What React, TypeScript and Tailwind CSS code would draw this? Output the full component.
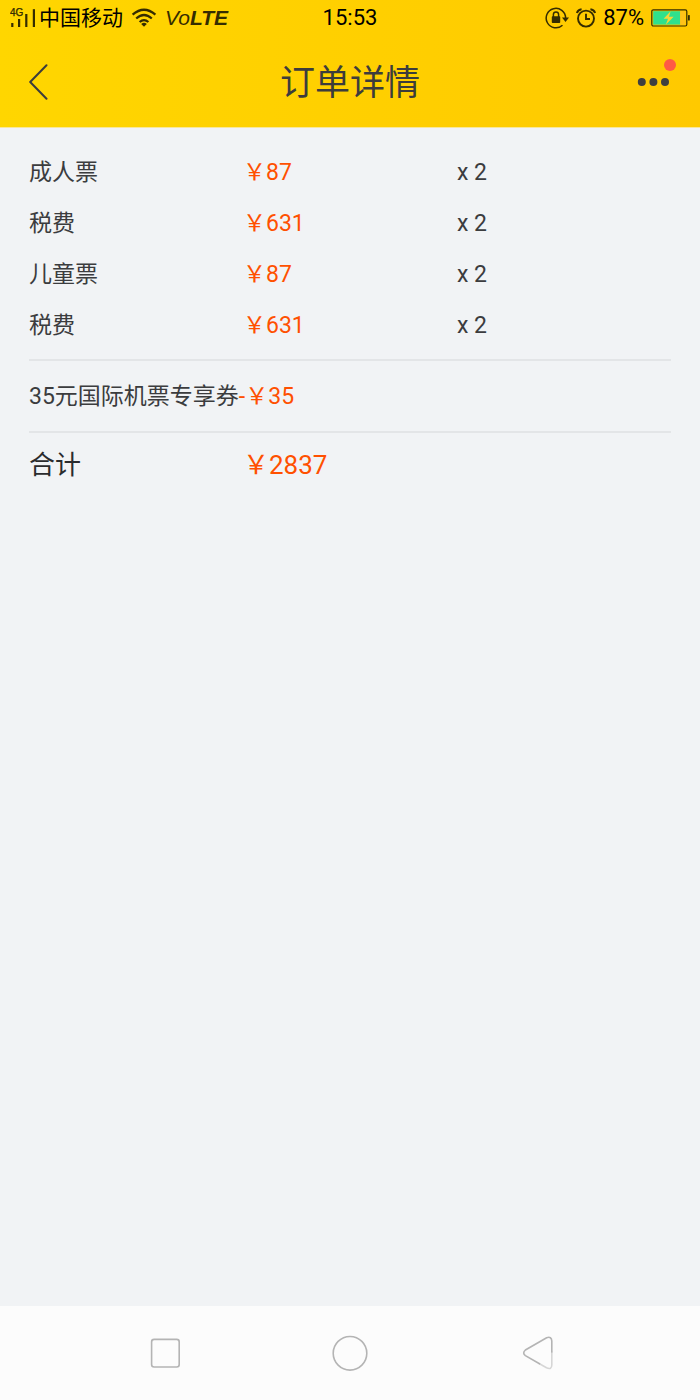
type Fare = { label: string; price: string; count: string };

const fares: Fare[] = [
  { label: "成人票", price: "￥87", count: "x 2" },
  { label: "税费", price: "￥631", count: "x 2" },
  { label: "儿童票", price: "￥87", count: "x 2" },
  { label: "税费", price: "￥631", count: "x 2" },
];

function SignalIcon() {
  return (
    <svg width="27" height="20" viewBox="0 0 27 20" fill="#352c00" aria-hidden="true">
      <text x="0" y="8" fontSize="10" fontWeight="400" stroke="#352c00" strokeWidth="0.3" fontFamily="Liberation Sans, sans-serif">
        4G
      </text>
      <rect x="1.2" y="15" width="2.2" height="4" />
      <rect x="8" y="11" width="2.2" height="8" />
      <rect x="15.2" y="6" width="2.2" height="13" />
      <rect x="22.8" y="1.2" width="2.2" height="17.8" />
    </svg>
  );
}

function WifiIcon() {
  return (
    <svg width="26" height="20" viewBox="0 0 26 20" fill="none" stroke="#352c00" strokeWidth="2.3" aria-hidden="true">
      <path d="M1.6 6.7Q13 -3.1 24.4 6.7" />
      <path d="M5.2 10.5Q13 3.6 20.8 10.5" />
      <path d="M8.6 14Q13 10.2 17.4 14" />
      <path d="M10.2 16Q13 13.6 15.8 16L13 18.8Z" fill="#352c00" stroke="none" />
    </svg>
  );
}

function RotationLockIcon() {
  return (
    <svg width="24" height="22" viewBox="0 0 24 22" fill="none" stroke="#352c00" strokeWidth="1.5" aria-hidden="true">
      <path d="M17.5 18.2A9.7 9.7 0 1 1 20.6 11" />
      <path d="M17 10.6H24L20.5 15Z" fill="#352c00" stroke="none" />
      <path d="M8.4 10V7.6a2.6 2.6 0 0 1 5.2 0V10" />
      <rect x="6.8" y="9.2" width="8.4" height="6.8" rx="0.8" fill="#352c00" stroke="none" />
    </svg>
  );
}

function AlarmIcon() {
  return (
    <svg width="20" height="20" viewBox="0 0 20 20" fill="none" stroke="#352c00" strokeWidth="1.9" aria-hidden="true">
      <circle cx="10" cy="10.6" r="8" />
      <path d="M10 5.8V11H14" />
      <path d="M0.9 5Q2 1.8 5.6 1.3M19.1 5Q18 1.8 14.4 1.3" strokeWidth="2" />
    </svg>
  );
}

function BatteryIcon() {
  return (
    <svg width="39" height="18" viewBox="0 0 39 18" aria-hidden="true">
      <rect x="0.8" y="0.8" width="35" height="16.2" rx="1.5" fill="#ffca00" stroke="#352c00" strokeWidth="1.2" />
      <rect x="2.2" y="2.2" width="27" height="13.4" fill="#2fe08d" />
      <rect x="29.2" y="2.2" width="5" height="13.4" fill="#ffc21a" />
      <path d="M19.6 2.2L12.6 9.8H17L14.8 15.8L22.6 7.8H18Z" fill="#f3d63a" />
      <rect x="37" y="6" width="1.8" height="5.6" rx="0.6" fill="#352c00" />
    </svg>
  );
}

function StatusBar() {
  return (
    <div className="grid h-9 grid-cols-[1fr_auto_1fr] items-center px-2.5 text-[22px] leading-9 text-black">
      <div className="flex items-center">
        <SignalIcon />
        <span className="ml-0.5 text-[21px]">中国移动</span>
        <span className="ml-2 flex">
          <WifiIcon />
        </span>
        <span className="ml-2 font-['Liberation_Sans',sans-serif] text-[21px] text-[#352c00] italic">
          Vo<b>LTE</b>
        </span>
      </div>
      <time>15:53</time>
      <div className="flex items-center justify-end gap-[7px]">
        <RotationLockIcon />
        <AlarmIcon />
        <span>87%</span>
        <BatteryIcon />
      </div>
    </div>
  );
}

function TitleBar() {
  return (
    <div className="grid h-[91px] grid-cols-[1fr_auto_1fr] items-center px-7 text-[#3c3c3c]">
      <button type="button" aria-label="返回" className="flex w-10 items-center py-4">
        <svg width="20" height="36" viewBox="0 0 20 36" fill="none" stroke="#3c3c3c" strokeWidth="2" strokeLinecap="round" strokeLinejoin="round">
          <path d="M18.5 1.2L2.2 18L18.5 34.8" />
        </svg>
      </button>
      <h1 className="pt-1 text-[35px] leading-[52px]">订单详情</h1>
      <button type="button" aria-label="更多" className="relative flex justify-self-end">
        <svg width="40" height="48" viewBox="0 0 40 48" fill="#3f3f3f">
          <circle cx="9.8" cy="24" r="4" />
          <circle cx="21.4" cy="24" r="4" />
          <circle cx="33" cy="24" r="4" />
        </svg>
        <span className="absolute top-px -right-1 size-3 rounded-full bg-[#ff5a45]" />
      </button>
    </div>
  );
}

function NavBar() {
  return (
    <nav className="grid h-[94px] grid-cols-3 items-center bg-[#fcfcfc] px-[72px]">
      <button type="button" aria-label="最近任务" className="flex justify-center">
        <svg width="40" height="40" viewBox="0 0 40 40" fill="none" stroke="#b4b4b4" strokeWidth="1.6">
          <rect x="6.6" y="6.4" width="27.6" height="27.6" rx="2.5" />
        </svg>
      </button>
      <button type="button" aria-label="主页" className="flex justify-center">
        <svg width="40" height="40" viewBox="0 0 40 40" fill="none" stroke="#b4b4b4" strokeWidth="1.6">
          <circle cx="20" cy="20.3" r="16.8" />
        </svg>
      </button>
      <button type="button" aria-label="后退" className="flex justify-center">
        <svg width="40" height="40" viewBox="0 0 40 40" fill="none" strokeWidth="1.6" strokeLinecap="round">
          <path d="M24.5 30.8L31.5 34.8Q36.8 37 36.8 32V19" stroke="#d6d6d6" />
          <path d="M36.8 19V8Q36.6 3 31.6 4.8L10.4 17Q7 20 10.4 22.6L24.5 30.8" stroke="#b4b4b4" />
        </svg>
      </button>
    </nav>
  );
}

export default function App() {
  return (
    <div className="flex min-h-screen flex-col bg-[#f1f3f5] font-[Roboto,'Noto_Sans_CJK_SC',sans-serif] text-[#3b3c3e]">
      <header className="border-b border-[#f8e79a] bg-linear-to-r from-[#ffd600] to-[#ffc900]">
        <StatusBar />
        <TitleBar />
      </header>
      <main className="flex-1 px-[29px] pt-5 text-[23px]">
        <table className="w-full table-fixed text-left">
          <tbody>
            {fares.map((fare, i) => (
              <tr key={i} className="h-[51px]">
                <th scope="row" className="p-0 font-normal">{fare.label}</th>
                <td className="p-0 text-[#ff5000]">{fare.price}</td>
                <td className="p-0">{fare.count}</td>
              </tr>
            ))}
          </tbody>
        </table>
        <div className="mt-[7px] border-y-2 border-[#e3e5e7] pt-px leading-[69px]">
          35元国际机票专享券<span className="text-[#ff5000]">-￥35</span>
        </div>
        <div className="grid grid-cols-3 text-[26px] leading-[64px] text-[#2a2b2d]">
          <span>合计</span>
          <span className="text-[#ff5000]">￥2837</span>
        </div>
      </main>
      <NavBar />
    </div>
  );
}
